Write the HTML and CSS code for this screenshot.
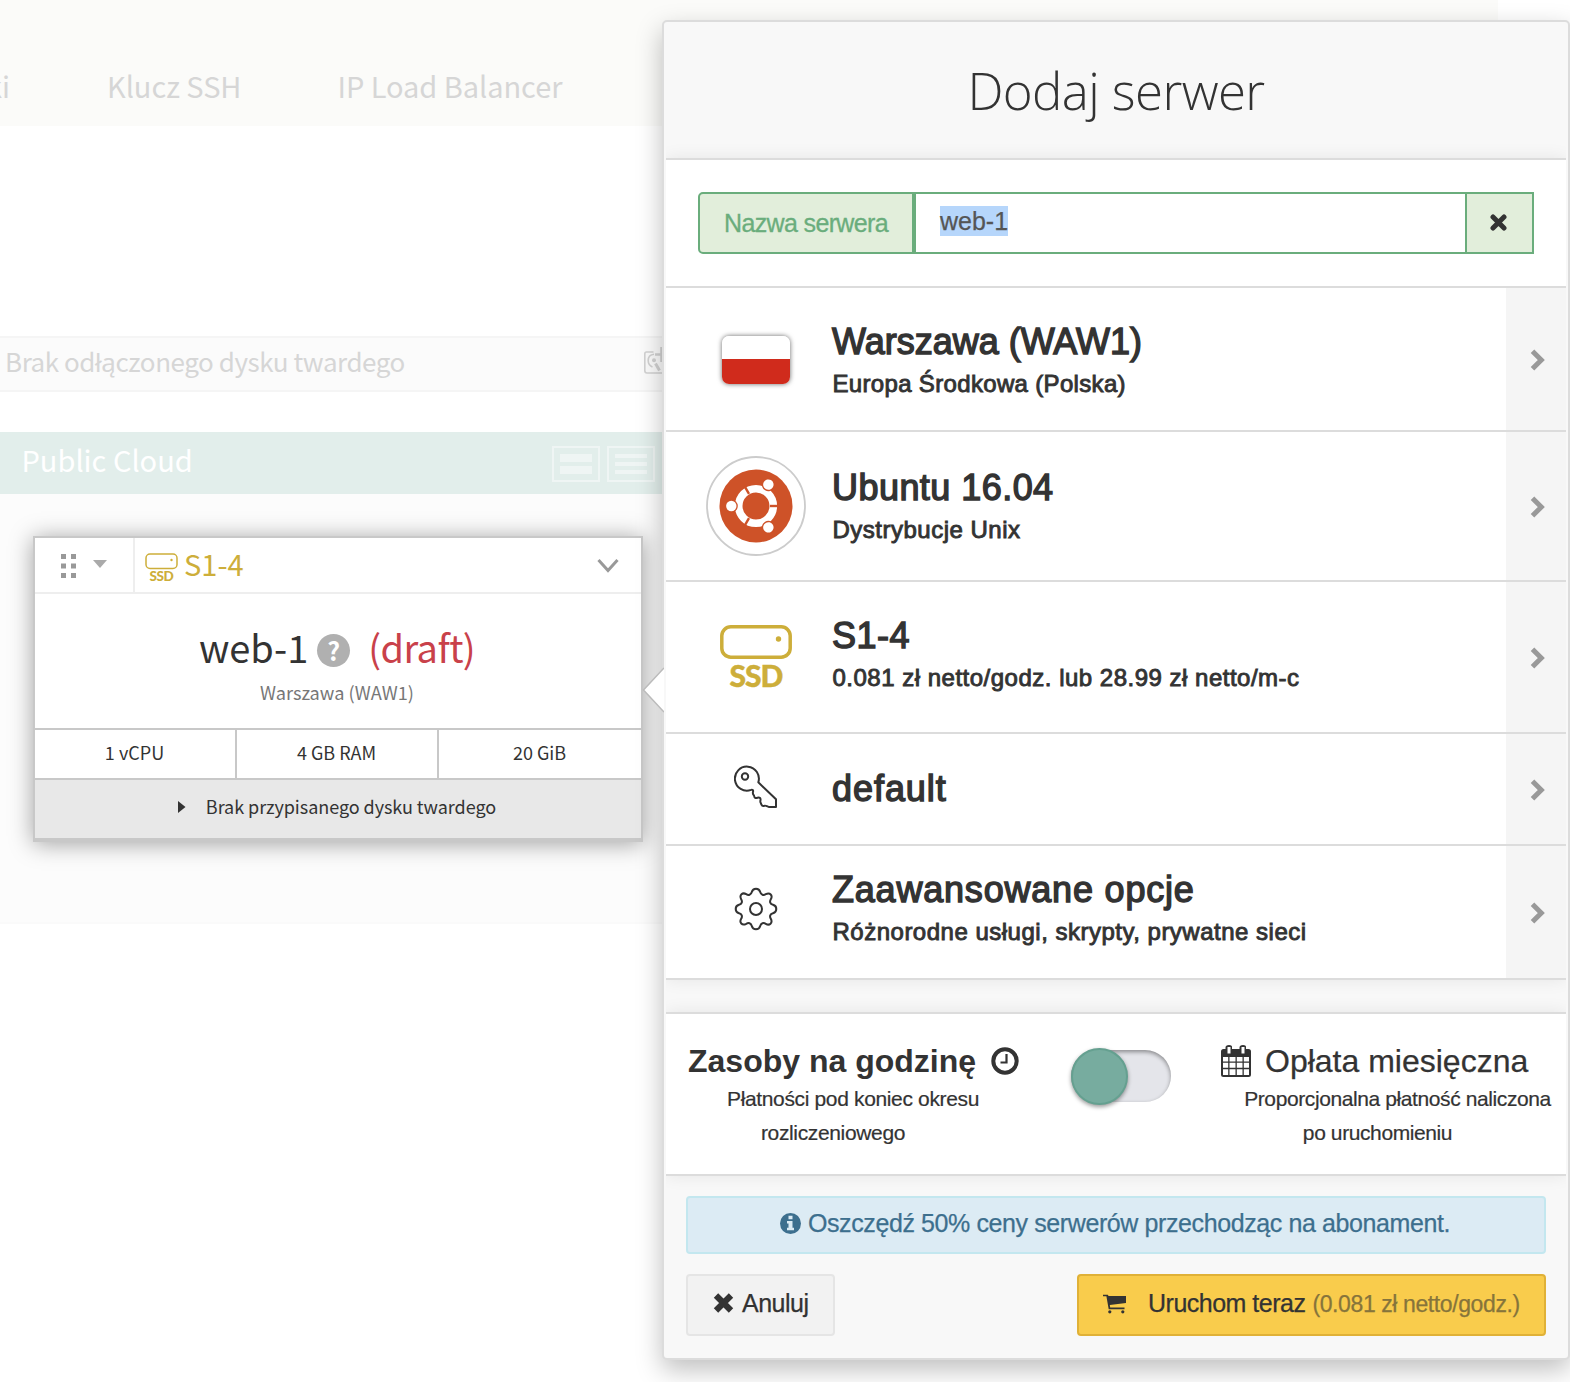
FILE: index.html
```html
<!DOCTYPE html>
<html lang="pl">
<head>
<meta charset="utf-8">
<title>Dodaj serwer</title>
<link rel="stylesheet" href="styles.css">
</head>
<body>
<main class="page">
  <section class="workspace">
    <nav class="tabs"><span class="tab-cut">ki</span><span>Klucz SSH</span><span>IP Load Balancer</span></nav>
    <div class="detached">
      <span>Brak odłączonego dysku twardego</span>
      <svg class="disk" width="24" height="30" viewBox="0 0 24 30" fill="none" stroke="#d2d2d2" stroke-width="1.600"><path d="M10.500 5H3.500Q1.800 5 1.800 7V23.500Q1.800 26 4 26H24M11 7.200C7 7.500 5.200 10.500 5.200 13.500S7 19 9.500 20"/><circle cx="11" cy="13.300" r="2" fill="#d2d2d2" stroke="none"/><path d="M12.500 16.500l4 7" stroke-width="3"/><path d="M12 7.500h8M18.500 0v15" stroke-width="2.600"/></svg>
    </div>
    <header class="cloud-head">
      <span>Public Cloud</span>
      <div class="views">
        <svg width="48" height="36" viewBox="0 0 48 36"><path d="M1 1h46v34H1z" fill="none" stroke="#eff5f4" stroke-width="2"/><path d="M8 8h32v8H8zM8 20h32v8H8z" fill="#eff5f4"/></svg>
        <svg width="48" height="36" viewBox="0 0 48 36"><path d="M1 1h46v34H1z" fill="none" stroke="#eff5f4" stroke-width="2"/><path d="M8 8h32v4H8zM8 16h32v4H8zM8 24h32v4H8z" fill="#eff5f4"/></svg>
      </div>
    </header>
    <div class="cloud-body">
      <article class="vm">
        <div class="vm-bar">
          <div class="grip">
            <svg width="16" height="26" viewBox="0 0 16 26" fill="#999"><path d="M0 1h5v5H0zM10 1h5v5h-5zM0 10.500h5v5H0zM10 10.500h5v5h-5zM0 20h5v5H0zM10 20h5v5h-5z"/></svg>
            <svg width="14" height="8" viewBox="0 0 14 8"><path d="M0 0h14L7 8z" fill="#aaa"/></svg>
          </div>
          <div class="flavor">
            <span class="ssd small"><svg width="33" height="17" viewBox="0 0 33 17"><rect x="1" y="1" width="31" height="14.500" rx="4" fill="none" stroke="#cdae3a" stroke-width="1.500"/><circle cx="26.500" cy="7" r="1.200" fill="#cdae3a"/></svg><b>SSD</b></span>
            <span class="flavor-name">S1-4</span>
            <svg class="chev" width="22" height="16" viewBox="0 0 22 16"><path d="M1.500 2L11 12.500 20.500 2" fill="none" stroke="#999" stroke-width="3"/></svg>
          </div>
        </div>
        <div class="vm-title">
          <h2><span class="vm-name">web-1</span><i class="help">?</i><span class="draft">(draft)</span></h2>
          <p>Warszawa (WAW1)</p>
        </div>
        <div class="specs"><span>1 vCPU</span><span>4 GB RAM</span><span>20 GiB</span></div>
        <div class="volume"><svg width="8" height="12" viewBox="0 0 8 12"><path d="M0 0l7.500 6L0 12z" fill="#333"/></svg><span>Brak przypisanego dysku twardego</span></div>
      </article>
    </div>
  </section>

  <aside class="panel">
    <svg class="pointer" width="22" height="46" viewBox="0 0 22 46"><path d="M22 1L1.500 23 22 45" fill="#fff" stroke="#bbb" stroke-width="1.500"/></svg>
    <header class="panel-head"><h1>Dodaj serwer</h1></header>
    <div class="sheet options">
      <div class="name-row">
        <label>Nazwa serwera</label>
        <div class="field"><mark>web-1</mark></div>
        <button class="clear" aria-label="clear"><svg width="17" height="17" viewBox="0 0 17 17"><path d="M3 3l11 11M14 3L3 14" stroke="#333" stroke-width="5" stroke-linecap="round"/></svg></button>
      </div>
      <div class="opt o1">
        <div class="pic"><i class="flag"></i></div>
        <div class="txt"><h3>Warszawa (WAW1)</h3><p>Europa Środkowa (Polska)</p></div>
        <div class="go"><svg width="16" height="22" viewBox="0 0 16 22"><path d="M2.500 2.200L11.300 11 2.500 19.800" fill="none" stroke="#999" stroke-width="5"/></svg></div>
      </div>
      <div class="opt o2">
        <div class="pic"><svg width="100" height="100" viewBox="0 0 100 100"><circle cx="50" cy="50" r="49" fill="#fff" stroke="#ccc" stroke-width="1.800"/><circle cx="50" cy="50" r="36.500" fill="#ce5228"/><circle cx="50" cy="50" r="17.300" fill="none" stroke="#fff" stroke-width="7.600"/><g id="arms"><path d="M64 50h9" stroke="#ce5228" stroke-width="2.400"/><circle cx="25.300" cy="50" r="6.500" fill="#ce5228"/><circle cx="25.300" cy="50" r="5.200" fill="#fff"/></g><use href="#arms" transform="rotate(120 50 50)"/><use href="#arms" transform="rotate(240 50 50)"/></svg></div>
        <div class="txt"><h3>Ubuntu 16.04</h3><p>Dystrybucje Unix</p></div>
        <div class="go"><svg width="16" height="22" viewBox="0 0 16 22"><path d="M2.500 2.200L11.300 11 2.500 19.800" fill="none" stroke="#999" stroke-width="5"/></svg></div>
      </div>
      <div class="opt o3">
        <div class="pic"><span class="ssd"><svg width="72" height="34" viewBox="0 0 72 34"><rect x="1.800" y="1.800" width="68.400" height="30.400" rx="9" fill="none" stroke="#cdae3a" stroke-width="3.500"/><circle cx="58.500" cy="14" r="2.700" fill="#cdae3a"/></svg><b>SSD</b></span></div>
        <div class="txt"><h3>S1-4</h3><p>0.081 zł netto/godz. lub 28.99 zł netto/m-c</p></div>
        <div class="go"><svg width="16" height="22" viewBox="0 0 16 22"><path d="M2.500 2.200L11.300 11 2.500 19.800" fill="none" stroke="#999" stroke-width="5"/></svg></div>
      </div>
      <div class="opt o4">
        <div class="pic"><svg width="44" height="44" viewBox="0 0 44 44" fill="none" stroke="#333" stroke-width="2" stroke-linejoin="round"><path d="M24.300 17.300A12 12 0 1 0 17 24.900C18.500 24.300 19.500 25.200 19 26.800C18.600 28.400 18.900 29.500 20 30.500C20.300 33 21.500 33.500 23.500 32.800C25.500 32.200 26.800 33 26.500 35C26.200 36.500 26.300 37.500 26.800 38C27.500 40.800 28.500 41.300 30.500 40.700C32 40.200 33 41.700 35 42H42V34.300L24.300 17.300Z"/><circle cx="11" cy="11.500" r="3.200"/></svg></div>
        <div class="txt"><h3>default</h3></div>
        <div class="go"><svg width="16" height="22" viewBox="0 0 16 22"><path d="M2.500 2.200L11.300 11 2.500 19.800" fill="none" stroke="#999" stroke-width="5"/></svg></div>
      </div>
      <div class="opt o5">
        <div class="pic"><svg width="44" height="44" viewBox="0 0 44 44" fill="none" stroke="#333" stroke-width="2" stroke-linejoin="round"><path d="M17.800 5C19 .6 25 .6 26.200 5C27 8 29.500 8.600 31.800 7.200C36 5 39 8.500 36.800 12.200C35.400 14.500 36 17 39 17.800C43.400 19 43.400 25 39 26.200C36 27 35.400 29.500 36.800 31.800C39 36 35.500 39 31.800 36.800C29.500 35.400 27 36 26.200 39C25 43.400 19 43.400 17.800 39C17 36 14.500 35.400 12.200 36.800C8 39 5 35.500 7.200 31.800C8.600 29.500 8 27 5 26.200C.6 25 .6 19 5 17.800C8 17 8.600 14.500 7.200 12.200C5 8 8.500 5 12.200 7.200C14.500 8.600 17 8 17.800 5Z"/><circle cx="22" cy="22" r="6"/></svg></div>
        <div class="txt"><h3>Zaawansowane opcje</h3><p>Różnorodne usługi, skrypty, prywatne sieci</p></div>
        <div class="go"><svg width="16" height="22" viewBox="0 0 16 22"><path d="M2.500 2.200L11.300 11 2.500 19.800" fill="none" stroke="#999" stroke-width="5"/></svg></div>
      </div>
    </div>
    <div class="sheet billing">
      <div class="hourly">
        <h4><span class="b1">Zasoby na godzinę</span><svg width="28" height="28" viewBox="0 0 28 28" fill="none" stroke="#333"><circle cx="14" cy="14" r="11.700" stroke-width="4"/><path d="M15.500 7v8.500H9.500" stroke-width="2.200"/></svg></h4>
        <p>Płatności pod koniec okresu<br>rozliczeniowego</p>
      </div>
      <div class="switch"><i></i></div>
      <div class="monthly">
        <h4><svg width="30" height="32" viewBox="0 0 30 32"><path fill="#333" fill-rule="evenodd" d="M2.500 4H4.500V2.500Q4.500 0 8 0T11 2.500V4H18.500V2.500Q18.500 0 22 0T25 2.500V4H27.500Q30 4 30 6.500V29.500Q30 32 27.500 32H2.500Q0 32 0 29.500V6.500Q0 4 2.500 4Z"/><path fill="#fff" d="M6.500 2h3v6.500h-3zM20.500 2h3v6.500h-3zM2 12h5.200v4.500H2zM8.500 12h6v4.500h-6zM15.800 12h5.700v4.500h-5.700zM22.800 12H28v4.500h-5.200zM2 17.800h5.200v5H2zM8.500 17.800h6v5h-6zM15.800 17.800h5.700v5h-5.700zM22.800 17.800H28v5h-5.200zM2 24.200h5.200V30H2zM8.500 24.200h6V30h-6zM15.800 24.200h5.700V30h-5.700zM22.800 24.200H28V30h-5.200z"/></svg><span class="b2">Opłata miesięczna</span></h4>
        <p>Proporcjonalna płatność naliczona<br>po uruchomieniu</p>
      </div>
    </div>
    <div class="notice"><svg width="21" height="21" viewBox="0 0 21 21"><circle cx="10.500" cy="10.500" r="10.500" fill="#3d6f8e"/><path fill="#dcebf4" d="M8.500 2.800h4v3.400h-4zM7 8h5.500v6.800H14v2.400H7v-2.400h1.500v-4.300H7z"/></svg><span>Oszczędź 50% ceny serwerów przechodząc na abonament.</span></div>
    <footer class="actions">
      <button class="btn cancel"><svg width="21" height="20" viewBox="0 0 21 20"><path d="M3 2.500l15 15M18 2.500l-15 15" stroke="#333" stroke-width="6.200"/></svg><span>Anuluj</span></button>
      <button class="btn launch"><svg width="23" height="20" viewBox="0 0 23 20"><path fill="#333" d="M0 .8h4.800l.8 1.200H23v7L6.800 11l.4 2.600H21.500v1.600H5.700L3.400 2.300H0z"/><circle cx="6.800" cy="17.800" r="1.600" fill="#333"/><circle cx="19.800" cy="17.800" r="1.600" fill="#333"/></svg><span class="a2">Uruchom teraz</span><small>(0.081 zł netto/godz.)</small></button>
    </footer>
  </aside>
</main>
</body>
</html>
```
FILE: styles.css
```css
* { box-sizing: border-box; }
body { margin: 0; background: #fff; color: #333; font-family: "Liberation Sans", Arial, sans-serif; }
h1, h2, h3, h4, p { margin: 0; font-weight: normal; }
svg { display: block; flex: none; }
button { font: inherit; color: inherit; margin: 0; }
.page { position: relative; width: 1570px; height: 1382px; overflow: hidden; }

.workspace { font-family: "Noto Sans CJK SC", "Noto Sans", sans-serif; }
.tabs { display: flex; width: 1498px; height: 126px; padding-top: 64px; background: #fbfbf9; color: #d6d6d6; font-size: 29px; letter-spacing: -.05px; line-height: 42px; white-space: nowrap; }
.tab-cut { display: flex; justify-content: flex-end; width: 10px; margin-right: 97px; }
.tabs span:nth-child(2) { width: 230.500px; }
.detached { display: flex; justify-content: space-between; width: 667px; height: 56px; margin-top: 210px; padding: 0 0 0 5px; border-top: 2px solid #f5f5f5; border-bottom: 2px solid #f5f5f5; background: #fbfbfb; color: #d6d6d6; font-size: 26px; letter-spacing: -.45px; line-height: 46px; }
.disk { margin: 9px 0 0; }
.cloud-head { display: flex; justify-content: space-between; width: 662px; height: 62px; margin-top: 40px; padding: 0 7px 0 21.500px; background: #e2eeeb; color: #fff; font-size: 29px; line-height: 54px; }
.views { display: flex; gap: 7px; padding-top: 14px; }
.cloud-body { width: 662px; height: 430px; padding: 42px 0 0 33px; background: #fcfcfc; border-bottom: 2px solid #fafafa; }
.vm { width: 610px; height: 306px; border: 2px solid #c8c8c8; border-bottom-width: 4px; background: #fff; box-shadow: 0 2px 22px rgba(0,0,0,.36); }
.vm-bar { display: flex; height: 56px; border-bottom: 2px solid #eee; }
.grip { display: flex; align-items: center; gap: 16px; width: 100px; padding: 2px 0 0 26px; border-right: 2px solid #eee; }
.grip svg:last-child { margin-top: -4px; }
.flavor { display: flex; flex: 1; align-items: center; padding: 0 22px 0 10px; color: #cdae3a; font-size: 29px; }
.flavor-name { margin: -4px 0 0 6px; line-height: 54px; }
.chev { margin: 2px 0 0 auto; }
.ssd { display: flex; flex-direction: column; align-items: center; width: 72px; color: #cdae3a; font-family: Lato, sans-serif; padding-top: 3px; }
.ssd b { margin-top: -1px; font-size: 30px; font-weight: 900; line-height: 34px; letter-spacing: -1px; -webkit-text-stroke: .4px; }
.ssd.small { width: 33px; padding-top: 6px; }
.ssd.small b { margin-top: -1px; font-size: 13.500px; line-height: 14px; letter-spacing: -.4px; -webkit-text-stroke: 0; }
.vm-title { height: 134px; text-align: center; }
.vm-title h2 { display: flex; justify-content: center; align-items: center; padding: 27px 2px 0 0; font-size: 38px; line-height: 52px; }
.help { width: 33px; height: 33px; margin: 7px 18px 0 9px; border-radius: 50%; background: #b0b0b0; color: #fff; font: bold 25px/32px "Noto Sans CJK SC", sans-serif; }
.draft { color: #c9414a; letter-spacing: -.6px; }
.vm-title p { padding-top: 6px; margin-left: -2px; color: #777; font-size: 18.200px; line-height: 26px; }
.specs { display: grid; grid-template-columns: 200px 202px 1fr; height: 52px; border: solid #c8c8c8; border-width: 2px 0; font-size: 18px; line-height: 44px; text-align: center; }
.specs span { padding-right: 1px; }
.specs span + span { border-left: 2px solid #c8c8c8; }
.volume { display: flex; justify-content: center; align-items: center; gap: 20px; height: 58px; background: #e8e8e8; font-size: 18px; letter-spacing: -.05px; padding: 0 2px 3px 0; }
.volume span { margin-top: -4px; }
.volume svg { margin-top: -2px; }

.panel { position: absolute; left: 662px; top: 20px; width: 908px; height: 1340px; padding: 0 2px; border: 2px solid #dcdcdc; border-radius: 5px; background: #f8f8f8; box-shadow: 0 10px 26px rgba(0,0,0,.25); }
.pointer { position: absolute; left: -22px; top: 645px; }
.panel-head { height: 136px; }
h1 { padding-top: 33px; font: 300 51px/70px "Open Sans", sans-serif; text-align: center; letter-spacing: -.6px; }
.sheet { background: #fff; border: solid #dcdcdc; border-width: 2px 0; box-shadow: 0 0 16px rgba(0,0,0,.08); clip-path: inset(-20px 0); }
.name-row { display: flex; height: 126px; padding: 32px 32px; }
.name-row label { width: 216px; border: 2px solid #6aad7c; border-radius: 5px 0 0 5px; background: #e2eedb; color: #6aad7c; font-size: 25px; letter-spacing: -.65px; line-height: 59px; text-align: center; -webkit-text-stroke: .3px; }
.field { flex: 1; border: solid #6aad7c; border-width: 2px 0 2px 2px; padding: 12px 24px; font-size: 25px; line-height: 30px; }
.field mark { display: inline-block; height: 30px; background: #b6d6fb; color: #555; -webkit-text-stroke: .25px; }
.clear { display: flex; align-items: center; justify-content: center; width: 69px; border: 2px solid #6aad7c; background: #e2eedb; padding: 0 2px 2px 0; }
.opt { display: grid; grid-template-columns: 166px 1fr 60px; border-top: 2px solid #dcdcdc; }
.o1 { height: 144px; } .o2 { height: 150px; } .o3 { height: 152px; } .o4 { height: 112px; } .o5 { height: 134px; }
.pic { display: flex; align-items: center; justify-content: center; padding-left: 14px; }
.o1 .pic { padding-top: 1px; }
.o4 .pic { padding-bottom: 4px; } .o5 .pic { padding-bottom: 6px; }
.txt { padding-top: 33px; white-space: nowrap; }
.o2 .txt { padding-top: 35px; } .o4 .txt { padding-top: 34px; } .o5 .txt { padding-top: 23px; }
h3 { font-size: 36px; line-height: 42px; -webkit-text-stroke: 1.400px; }
.txt p { margin-left: .5px; font-size: 24px; line-height: 42px; letter-spacing: .5px; -webkit-text-stroke: .9px; }
.o1 .txt p { letter-spacing: .33px; }
.o2 h3 { letter-spacing: .45px; }
.o3 h3 { letter-spacing: .5px; }
.o4 h3 { letter-spacing: .95px; }
.o5 h3 { letter-spacing: .8px; }
.go { display: flex; align-items: center; justify-content: center; padding: 2px 0 0 3px; background: #f5f5f5; }
.flag { width: 68px; height: 48px; border-radius: 7px; background: linear-gradient(#fff 48%, #d02b1c 48%); box-shadow: 0 0 5px rgba(0,0,0,.6); }
.billing { display: flex; height: 164px; margin-top: 32px; }
.hourly { width: 405px; }
h4 { display: flex; font-size: 32px; line-height: 40px; padding: 27px 0 1px 22px; white-space: nowrap; }
.b1 { font-weight: bold; margin-right: 15px; }
.b2 { margin-left: 14px; -webkit-text-stroke: .25px; }
.hourly h4 svg { margin-top: 6px; } .monthly h4 svg { margin-top: 4px; }
.billing p { font-size: 21px; line-height: 34px; letter-spacing: -.4px; text-align: center; text-indent: 40px; white-space: nowrap; -webkit-text-stroke: .2px; }
.hourly p { width: 334px; letter-spacing: -.35px; }
.switch { width: 100px; height: 52px; margin-top: 36px; border-radius: 27px; background: #e4e5ea; box-shadow: inset 0 2px 4px rgba(0,0,0,.4); }
.switch i { display: block; width: 57px; height: 57px; margin: -2px 0 0; border: 2px solid #65a090; border-radius: 50%; background: #77ac9f; box-shadow: 0 2px 4px rgba(0,0,0,.4); }
.monthly { flex: 1; }
.monthly h4 { padding-left: 50px; }
.monthly p { margin-left: 18px; }
.notice { display: flex; align-items: center; justify-content: center; gap: 7px; height: 58px; margin: 20px 20px 0; border: 2px solid #c3e7ef; border-radius: 4px; background: #dcebf4; color: #3d6f8e; font-size: 25px; letter-spacing: -.4px; padding: 0 2px 3px 0; white-space: nowrap; -webkit-text-stroke: .25px; }
.actions { display: flex; justify-content: space-between; padding: 20px 20px 0; }
.btn { display: flex; align-items: center; height: 62px; padding: 0 0 3px 25px; border: 2px solid #e5e5e5; border-radius: 4px; background: #f2f2f2; font-size: 25px; letter-spacing: -.5px; white-space: nowrap; -webkit-text-stroke: .25px; }
.cancel { width: 149px; gap: 8px; }
.cancel svg { margin-top: -2px; }
.launch { width: 469px; padding-left: 24px; border-color: #e0b137; background: #f9cc4c; }
.a2 { margin: 0 7px 0 22px; }
.launch small { margin-top: 1px; color: #86743b; font-size: 23px; letter-spacing: -.4px; }
```
